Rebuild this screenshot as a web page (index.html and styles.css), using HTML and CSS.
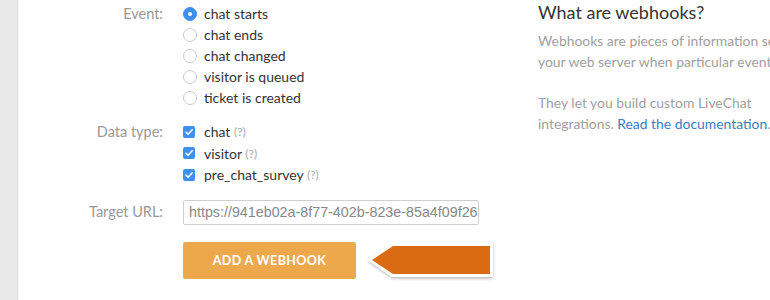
FILE: index.html
```html
<!DOCTYPE html>
<html>
<head>
<meta charset="utf-8">
<link rel="stylesheet" href="styles.css">
</head>
<body>
<div class="page">
  <div class="sidebar"></div>
  <div class="main">
    <form class="form">
      <div class="label">Event:</div>
      <div class="group">
        <label class="opt"><span class="radio checked"></span>chat starts</label>
        <label class="opt"><span class="radio"></span>chat ends</label>
        <label class="opt"><span class="radio"></span>chat changed</label>
        <label class="opt"><span class="radio"></span>visitor is queued</label>
        <label class="opt"><span class="radio"></span>ticket is created</label>
      </div>

      <div class="label">Data type:</div>
      <div class="group data">
        <label class="opt"><span class="check"><svg viewBox="0 0 12 12" width="12" height="12"><path d="M3 6.2 L5.1 8.3 L9.2 3.8" fill="none" stroke="#fff" stroke-width="1.6" stroke-linecap="round" stroke-linejoin="round"/></svg></span>chat <span class="help">(?)</span></label>
        <label class="opt"><span class="check"><svg viewBox="0 0 12 12" width="12" height="12"><path d="M3 6.2 L5.1 8.3 L9.2 3.8" fill="none" stroke="#fff" stroke-width="1.6" stroke-linecap="round" stroke-linejoin="round"/></svg></span>visitor <span class="help">(?)</span></label>
        <label class="opt"><span class="check"><svg viewBox="0 0 12 12" width="12" height="12"><path d="M3 6.2 L5.1 8.3 L9.2 3.8" fill="none" stroke="#fff" stroke-width="1.6" stroke-linecap="round" stroke-linejoin="round"/></svg></span>pre_chat_survey <span class="help">(?)</span></label>
      </div>

      <div class="label url-label">Target URL:</div>
      <div class="group url">
        <div class="input">https://941eb02a-8f77-402b-823e-85a4f09f26e3</div>
      </div>

      <div></div>
      <div class="actions">
        <button type="button" class="btn">ADD A WEBHOOK</button>
        <svg class="arrow" width="132" height="44" viewBox="0 0 132 44">
          <defs>
            <filter id="sh" x="-10%" y="-20%" width="120%" height="150%">
              <feDropShadow dx="0" dy="1.5" stdDeviation="1.8" flood-color="#000" flood-opacity="0.28"/>
            </filter>
          </defs>
          <polygon points="3,20 27,3 128,3 128,37 27,37" fill="#fff" filter="url(#sh)"/>
          <polygon points="7,20 28,6 125,6 125,34 28,34" fill="#da6b12"/>
        </svg>
      </div>
    </form>

    <aside class="aside">
      <h2 class="title">What are webhooks?</h2>
      <p class="text">Webhooks are pieces of information sent to<br>your web server when particular events happen.</p>
      <p class="text">They let you build custom LiveChat<br>integrations. <a class="link" href="#">Read the documentation</a>.</p>
    </aside>
  </div>
</div>
</body>
</html>
```

FILE: styles.css
```css
* { box-sizing: border-box; }
html, body { margin: 0; padding: 0; background: #fff; }
body { font-family: Lato, "Open Sans", sans-serif; color: #333; overflow: hidden; }

.page { display: flex; width: 770px; height: 300px; overflow: hidden; }
.sidebar {
  width: 18px; flex: none; background: #e9e9e9;
  border-right: 1px solid #dedede;
  box-shadow: 1px 0 1px rgba(0,0,0,0.04);
}
.main { flex: 1; display: flex; min-width: 0; }

.form {
  width: 520px; flex: none;
  display: grid;
  grid-template-columns: 145px 1fr;
  column-gap: 20px;
  align-content: start;
  padding-top: 3px;
  margin: 0;
}
.label {
  text-align: right; color: #999; font-size: 14.5px; line-height: 21px;
}
.group { display: flex; flex-direction: column; margin-bottom: 13px; }
.group.data { margin-bottom: 14px; }
.opt {
  display: flex; align-items: center; height: 21px;
  font-size: 14px; color: #333; white-space: pre;
}
.group.data .opt { height: 21.5px; }
.radio {
  width: 14px; height: 14px; border-radius: 50%;
  border: 1px solid #c9c9c9; background: #fff;
  margin-right: 7px; flex: none;
}
.radio.checked {
  background: #3d8ff0; border-color: #3d8ff0; position: relative;
}
.radio.checked::after {
  content: ""; position: absolute; left: 4px; top: 4px;
  width: 4px; height: 4px; border-radius: 50%; background: #fff;
}
.check {
  width: 12px; height: 12px; border-radius: 2px; background: #3d8ff0;
  margin-right: 9px; flex: none; display: flex;
}
.check svg { display: block; }
.help { font-size: 12px; color: #aaa; }

.url-label { line-height: 24px; }
.group.url { margin-bottom: 13px; }
.input {
  width: 296px; height: 25px;
  border: 1px solid #cfcfcf; border-radius: 2px;
  font-family: "Liberation Sans", Arial, sans-serif; font-size: 14.3px; color: #888;
  padding: 0 5px; line-height: 23px; white-space: nowrap; overflow: hidden;
}

.actions { display: flex; align-items: center; gap: 11px; }
.btn {
  width: 173px; height: 37px; border: none; border-radius: 2px;
  background: #eda84c; color: #fff;
  font-family: Lato, sans-serif; font-weight: 700; font-size: 12.5px; letter-spacing: 0.4px;
  padding: 0; cursor: pointer;
}
.arrow { display: block; margin-top: 2px; margin-left: -2px; }

.aside { padding: 0; flex: 1; min-width: 0; overflow: hidden; }
.title {
  margin: 0; font-weight: 400; font-size: 18px; line-height: 24px; color: #333; white-space: nowrap;
}
.text {
  margin: 6px 0 20px; font-size: 13.9px; line-height: 21px; color: #a0a0a0; white-space: nowrap;
}
.text + .text { margin-top: 0; }
.link { color: #3a7bbf; text-decoration: none; }
```
